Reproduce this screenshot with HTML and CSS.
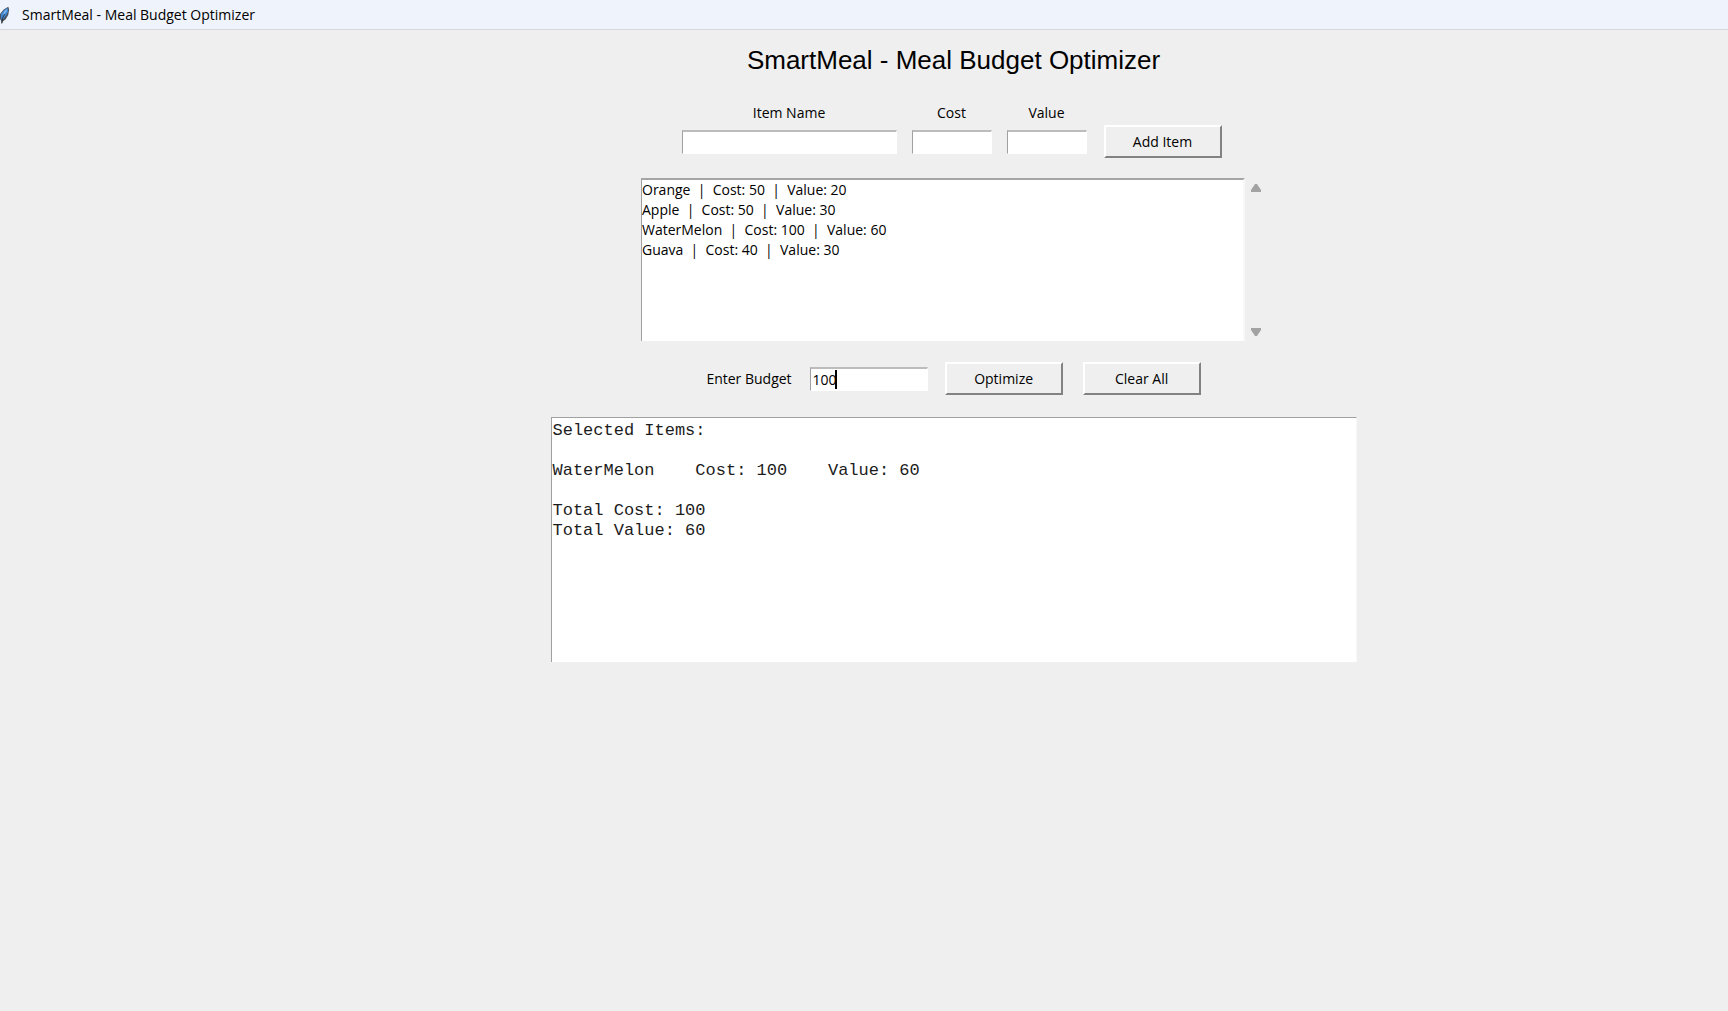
FILE: index.html
```html
<!DOCTYPE html>
<html lang="en">
<head>
<meta charset="utf-8">
<meta name="viewport" content="width=device-width, initial-scale=1">
<title>SmartMeal - Meal Budget Optimizer</title>
<link rel="stylesheet" href="styles.css">
</head>
<body>
<header class="titlebar">
  <svg class="feather" viewBox="0 0 12 20" aria-hidden="true">
    <path d="M9 1 10 4 9 10 6 15 3 17 2 20 1 16 0 14V9L4 4Z" fill="#4b535c"/>
    <path d="M8 2 4 5 1 9V14L3 15 7 10 9 6Z" fill="#3f86d2"/>
    <path d="M8 3 5 6 3 10 5 9 7 6Z" fill="#86b9ec"/>
    <path d="M5 9 3 13 2 19" fill="none" stroke="#27333f"/>
  </svg>
  <span>SmartMeal - Meal Budget Optimizer</span>
</header>
<main class="content">
  <h1 class="heading">SmartMeal - Meal Budget Optimizer</h1>
  <form class="item-form">
    <div class="field field-name">
      <label for="item-name">Item Name</label>
      <input class="entry" id="item-name" type="text">
    </div>
    <div class="field field-number">
      <label for="cost">Cost</label>
      <input class="entry" id="cost" type="text">
    </div>
    <div class="field field-number">
      <label for="value">Value</label>
      <input class="entry" id="value" type="text">
    </div>
    <button class="button" type="button">Add Item</button>
  </form>
  <section class="list-area" aria-label="Items">
    <ul class="items">
      <li>Orange&nbsp; |&nbsp; Cost: 50&nbsp; |&nbsp; Value: 20</li>
      <li>Apple&nbsp; |&nbsp; Cost: 50&nbsp; |&nbsp; Value: 30</li>
      <li>WaterMelon&nbsp; |&nbsp; Cost: 100&nbsp; |&nbsp; Value: 60</li>
      <li>Guava&nbsp; |&nbsp; Cost: 40&nbsp; |&nbsp; Value: 30</li>
    </ul>
    <div class="scrollbar">
      <button class="arrow" type="button" aria-label="Scroll up"><svg viewBox="0 0 10 8"><path d="M4 0H6L10 6V8H0V6Z" fill="#a3a3a3"/></svg></button>
      <button class="arrow" type="button" aria-label="Scroll down"><svg viewBox="0 0 10 8"><path d="M0 0H10V2L6 8H4L0 2Z" fill="#a3a3a3"/></svg></button>
    </div>
  </section>
  <form class="budget-form">
    <label for="budget">Enter Budget</label>
    <div class="budget-box">
      <input class="entry" id="budget" type="text" value="100">
      <span class="caret"></span>
    </div>
    <button class="button" type="button">Optimize</button>
    <button class="button" type="button">Clear All</button>
  </form>
  <pre class="output">Selected Items:

WaterMelon    Cost: 100    Value: 60

Total Cost: 100
Total Value: 60</pre>
</main>
</body>
</html>
```
FILE: styles.css
```css
* {
  box-sizing: border-box;
}

body {
  margin: 0;
  min-height: 100vh;
  background: #efefef;
  color: #000;
  font: 14px/20px "Open Sans", "Noto Sans", sans-serif;
}

.titlebar {
  display: flex;
  align-items: center;
  gap: 11px;
  height: 30px;
  background: #eff3fb;
  border-bottom: 1px solid #d3d6dc;
}

.feather {
  width: 11px;
  height: 20px;
}

.content {
  display: flex;
  flex-direction: column;
  align-items: center;
  padding: 14px 0 24px 179px;
}

.heading {
  margin: 0;
  font: 26px/32px "Liberation Sans", Arial, sans-serif;
}

.item-form {
  display: flex;
  align-items: flex-end;
  margin: 27px 4px 0 0;
}

.field {
  display: flex;
  flex-direction: column;
  gap: 7px;
  margin: 0 15px 4px 0;
  text-align: center;
}

.field-name {
  width: 215px;
}

.field-number {
  width: 80px;
}

.field-number + .button {
  margin-left: 2px;
}

.entry {
  width: 100%;
  height: 24px;
  padding: 0 2px;
  background: #fff;
  border: 1px solid #fff;
  border-top: 2px solid #bcbcbc;
  border-left: 1px solid #a0a0a0;
  border-radius: 0;
  color: #000;
  font: inherit;
  outline: none;
}

.button {
  width: 118px;
  height: 33px;
  padding: 0;
  background: #efefef;
  border: 2px solid;
  border-color: #fff #828282 #828282 #fff;
  border-radius: 0;
  color: #000;
  font: inherit;
}

.field-number + .button {
  margin-bottom: 0;
}

.list-area {
  display: flex;
  margin-top: 20px;
}

.items {
  width: 604px;
  height: 163px;
  margin: 0;
  padding: 0;
  background: #fff;
  border-top: 2px solid #a5a5a5;
  border-left: 1px solid #a0a0a0;
  border-right: 2px solid #f8f8f8;
  list-style: none;
}

.scrollbar {
  display: flex;
  flex-direction: column;
  justify-content: space-between;
  width: 21px;
  padding: 6px 4px 5px 6px;
}

.arrow {
  display: flex;
  padding: 0;
  border: 0;
  background: none;
}

.arrow svg {
  width: 10px;
  height: 8px;
}

.budget-form {
  display: flex;
  align-items: center;
  margin-top: 21px;
}

.budget-box {
  position: relative;
  width: 118px;
  margin: 0 17px 0 18px;
}

.budget-box .entry {
  display: block;
}

.caret {
  position: absolute;
  top: 3px;
  left: 25px;
  width: 2px;
  height: 19px;
  background: #000;
}

.button + .button {
  margin-left: 20px;
}

.output {
  width: 806px;
  height: 245px;
  margin: 22px 0 0;
  padding: 3px 1px;
  background: #fff;
  border-top: 1px solid #a0a0a0;
  border-left: 1px solid #a0a0a0;
  border-right: 1px solid #f8f8f8;
  color: #1c1c1c;
  font: 17px/20px "Liberation Mono", "Courier New", monospace;
}
```
